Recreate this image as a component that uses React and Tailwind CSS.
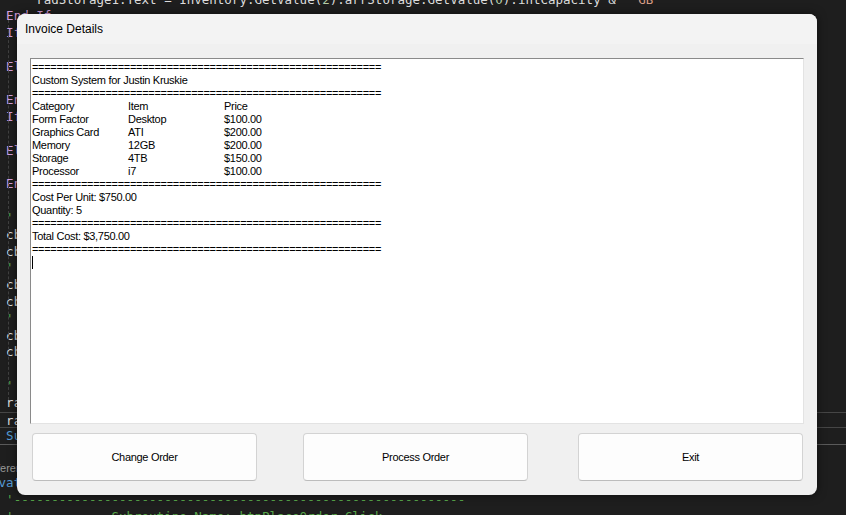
const GRAY = "text-[#dcdcdc]";

const codeLines = [
  [["        radStorage1.Text = Inventory.GetValue(", GRAY], ["2", "text-[#b5cea8]"], [").arrStorage.GetValue(", GRAY], ["0", "text-[#b5cea8]"], [").intCapacity & ", GRAY], ['" GB"', "text-[#d69d85]"]],
  [["    End If", "text-[#d8a0df]"]],
  [["    If", "text-[#d8a0df]"], [" radStorage2.Checked ", GRAY], ["Then", "text-[#d8a0df]"]],
  [["        strStorage = radStorage2.Text", GRAY]],
  [["    Else", "text-[#d8a0df]"]],
  [["        strStorage = radStorage1.Text", GRAY]],
  [["    End If", "text-[#d8a0df]"]],
  [["    If", "text-[#d8a0df]"], [" radMemory2.Checked ", GRAY], ["Then", "text-[#d8a0df]"]],
  [["        strMemory = radMemory2.Text", GRAY]],
  [["    Else", "text-[#d8a0df]"]],
  [["        strMemory = radMemory1.Text", GRAY]],
  [["    End If", "text-[#d8a0df]"]],
  [["", GRAY]],
  [["    ' Load form factors", "text-[#57a64a]"]],
  [["    cboFormFactor.Items.Clear()", GRAY]],
  [["    cboFormFactor.SelectedIndex = 0", GRAY]],
  [["    ' Load graphics cards", "text-[#57a64a]"]],
  [["    cboGraphics.Items.Clear()", GRAY]],
  [["    cboGraphics.SelectedIndex = 0", GRAY]],
  [["    ' Load processors", "text-[#57a64a]"]],
  [["    cboProcessor.Items.Clear()", GRAY]],
  [["    cboProcessor.SelectedIndex = 0", GRAY]],
  [["", GRAY]],
  [["    ' Default radio buttons", "text-[#57a64a]"]],
  [["    radMemory1.Checked = True", GRAY]],
  [["    radStorage1.Checked = True", GRAY]],
  [["End Sub", "text-[#569cd6]"]],
];

const rule = "=".repeat(57);

const parts = [
  ["Form Factor", "Desktop", "$100.00"],
  ["Graphics Card", "ATI", "$200.00"],
  ["Memory", "12GB", "$200.00"],
  ["Storage", "4TB", "$150.00"],
  ["Processor", "i7", "$100.00"],
];

function Row({ a, b, c }) {
  return (
    <div className="grid grid-cols-[96px_96px_1fr] h-[13px]">
      <span>{a}</span>
      <span>{b}</span>
      <span>{c}</span>
    </div>
  );
}

function WinButton({ children, className = "" }) {
  return (
    <button className={"w-[225px] h-[48px] shrink-0 rounded-[4px] bg-[#fdfdfd] border border-[#d3d3d3] border-b-[#bcbcbc] text-[11px] tracking-[-0.3px] text-black font-['Liberation_Sans',Arial,sans-serif] " + className}>
      {children}
    </button>
  );
}

export default function App() {
  return (
    <div className="relative w-[846px] h-[515px] overflow-hidden bg-[#1e1e1e] font-['DejaVu_Sans_Mono',monospace] text-[12.5px]">
      {/* editor behind the dialog */}
      <div className="flex flex-col mt-[-8.4px] ml-[-24px] whitespace-pre">
        {codeLines.map((segs, i) => (
          <div
            key={i}
            className={
              i === 25
                ? "h-[16.8px] leading-[16.8px] border-y border-[#464646] box-border"
                : i === 26
                ? "h-[16.8px] leading-[16.8px] border-b border-[#5a5a5a]"
                : "h-[16.8px] leading-[16.8px]"
            }
          >
            {segs.map(([t, c], j) => (
              <span key={j} className={c}>{t}</span>
            ))}
          </div>
        ))}
        <div className="h-[16px]" />
        <div className="h-[14px] leading-[14px] text-[11px] text-[#999999] font-['Liberation_Sans',sans-serif] ml-[2px]">
          0 references
        </div>
        <div className="h-[16.8px] leading-[16.8px]">
          <span className="text-[#569cd6]">Private Sub</span>
          <span className={GRAY}> btnPlaceOrder_Click(sender </span>
          <span className="text-[#569cd6]">As Object</span>
          <span className={GRAY}>, e </span>
          <span className="text-[#569cd6]">As</span>
          <span className={GRAY}> EventArgs) </span>
        </div>
        <div className="h-[16.8px] leading-[16.8px] text-[#57a64a]">{"    '" + "-".repeat(60)}</div>
        <div className="h-[16.8px] leading-[16.8px] text-[#57a64a]">{"    '             Subroutine Name: btnPlaceOrder_Click"}</div>
      </div>
      <div className="absolute left-[8px] top-[20px] h-[380px] border-l border-dashed border-[#404040]" />

      {/* dialog window */}
      <div className="absolute left-[17px] top-[14px] w-[800px] h-[481px] rounded-[8px] bg-[#f0f0f0] flex flex-col overflow-hidden shadow-[0_0_10px_rgba(0,0,0,0.55)] font-['Liberation_Sans',Arial,sans-serif]">
        <div className="h-[30px] bg-[#f3f3f3] flex items-center pl-[8px] text-[12px] text-black">
          Invoice Details
        </div>
        <div className="flex-1 flex flex-col px-[13px] pt-[14px]">
          <div className="h-[366px] bg-white border border-t-[#8a8a8a] border-l-[#8a8a8a] border-r-[#e3e3e3] border-b-[#e3e3e3] pt-[2px] pl-[1px] text-[11px] leading-[13px] tracking-[-0.3px] text-black">
            <div className="h-[13px]">{rule}</div>
            <div className="h-[13px]">Custom System for Justin Kruskie</div>
            <div className="h-[13px]">{rule}</div>
            <Row a="Category" b="Item" c="Price" />
            {parts.map((p) => (
              <Row key={p[0]} a={p[0]} b={p[1]} c={p[2]} />
            ))}
            <div className="h-[13px]">{rule}</div>
            <div className="h-[13px]">Cost Per Unit: $750.00</div>
            <div className="h-[13px]">Quantity: 5</div>
            <div className="h-[13px]">{rule}</div>
            <div className="h-[13px]">Total Cost: $3,750.00</div>
            <div className="h-[13px]">{rule}</div>
            <div className="h-[13px] flex items-center">
              <div className="w-[1px] h-[13px] bg-black" />
            </div>
          </div>
          <div className="mt-[9px] flex pl-[2px]">
            <WinButton>Change Order</WinButton>
            <WinButton className="ml-[46px]">Process Order</WinButton>
            <WinButton className="ml-[50px]">Exit</WinButton>
          </div>
        </div>
      </div>
    </div>
  );
}
